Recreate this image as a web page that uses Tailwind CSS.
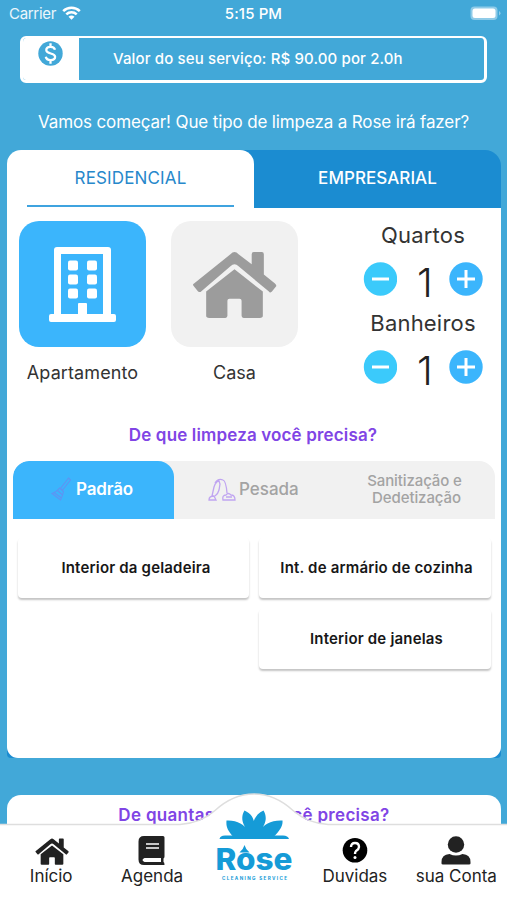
<!DOCTYPE html>
<html lang="pt-BR">
<head>
<meta charset="utf-8">
<title>Rose</title>
<script src="https://cdn.jsdelivr.net/npm/@tailwindcss/browser@4"></script>
</head>
<body class="relative h-[900px] w-[507px] overflow-hidden bg-[#42a8d8] font-['Inter','Liberation_Sans',sans-serif] whitespace-nowrap">
<svg class="hidden">
  <symbol id="house" viewBox="0 0 84 66">
    <path d="M2 32 38 3q4-4 8 0l13 10V3q0-2 2-2h8q2 0 2 2v20l11 9q2 2 1 3l-4 5q-2 2-3 0L46 15q-4-4-8 0L9 40q-1 1-3 0l-4-5q-2-2 0-3Z"/>
    <path d="m42 18 28 22v24q0 2-3 2H51q-2 0-2-2V49q0-2-2-2H37q-2 0-2 2v15q0 2-2 2H17q-3 0-3-2V40Z"/>
  </symbol>
</svg>

<header class="flex h-7 items-center text-[15px] text-white">
  <div class="flex w-[180px] items-center gap-[6px] pl-[9px]">
    <span class="text-white/90 tracking-[-0.3px]">Carrier</span>
    <svg class="-mt-[3px] h-[14px] w-[19px]" viewBox="0 0 19 14" fill="none" stroke="white" stroke-width="2.6"><path d="M1.2 5.1a12 12 0 0 1 16.6 0M4.3 8.4a7.5 7.5 0 0 1 10.4 0"/><path d="M9.5 13.8 6.5 10.8a4.5 4.5 0 0 1 6 0Z" fill="white" stroke="none"/></svg>
  </div>
  <span class="w-[147px] text-center font-medium tracking-[0.1px]">5:15 PM</span>
  <svg class="ml-auto mr-[6px] -mt-px h-[15px] w-[31px]" viewBox="0 0 31 15"><rect x=".5" y=".5" width="27" height="13.5" rx="4" fill="#8fcbe8"/><rect x="2.5" y="2.5" width="23" height="9.5" rx="2.5" fill="#fff"/><path d="M29 5q3 2 0 4.5Z" fill="#8fcbe8"/></svg>
</header>

<section class="mx-5 mt-2 flex h-[47px] overflow-hidden rounded-md border-[3px] border-white border-t-2 border-b-[3px]">
  <div class="w-[56px] shrink-0 bg-white pt-[3px] pl-[15px]">
    <svg class="h-[25px] w-[25px]" viewBox="0 0 25 25"><circle cx="12.5" cy="12.5" r="12.2" fill="#42a8d8"/><path d="M17 8.800C16 4.600 8.300 5 8.300 9.100c0 4.300 8.800 2.500 8.800 6.700 0 4.400-8.600 4.400-9.300 0M12.500 2.200v3.700M12.500 19v3.700" fill="none" stroke="#fff" stroke-width="2.300"/></svg>
  </div>
  <p class="pt-[10px] pl-[34px] text-[15px] leading-[22px] font-medium text-white tracking-[0.13px]">Valor do seu serviço: R$ 90.00 por 2.0h</p>
</section>
<p class="mt-[27px] h-[40px] text-center text-[17px] leading-6 text-white tracking-[-0.13px]">Vamos começar! Que tipo de limpeza a Rose irá fazer?</p>

<main class="mr-[6px] ml-[7px] h-[608px] rounded-t-[16px] rounded-b-[4px] bg-[#1b8cd1]">
  <div class="flex h-[58px] text-[17px] leading-6">
    <div class="w-[247px] rounded-tl-[16px] bg-[linear-gradient(90deg,#42a8d8_50%,#1b8cd1_50%)]"><div class="h-full rounded-t-[14px] bg-white px-5 pt-[16px] text-center text-[#2788cb]"><div class="h-[39px] tracking-[0.15px]">RESIDENCIAL</div><div class="h-[1.500px] bg-[#3fa3df]"></div></div></div>
    <div class="w-[247px] pt-[16px] text-center font-medium text-white tracking-[0.05px]">EMPRESARIAL</div>
  </div>
  <div class="h-[550px] rounded-b-[11px] bg-white pt-[13px]">
    <div class="flex h-[208px] pl-3 text-[18px] text-[#333]">
      <div class="w-[127px] text-center tracking-[0.1px]"><div class="mb-[12px] flex h-[126px] items-center justify-center rounded-[20px] bg-[#3bb5fc]">
        <svg class="h-[76px] w-[67px]" viewBox="0 0 67 76" fill="#fff"><path fill-rule="evenodd" d="M5 68V4q0-3 3-3h51q3 0 3 3v64h3q2 0 2 2v4q0 2-2 2H2q-2 0-2-2v-4q0-2 2-2ZM12 8v60h17V58q0-1 1-1h7q1 0 1 1v10h16V8Z"/><g><rect x="19" y="14.500" width="10" height="10" rx="2"/><rect x="38" y="14.500" width="10" height="10" rx="2"/><rect x="19" y="28.500" width="10" height="10" rx="2"/><rect x="38" y="28.500" width="10" height="10" rx="2"/><rect x="19" y="42.500" width="10" height="10" rx="2"/><rect x="38" y="42.500" width="10" height="10" rx="2"/></g></svg>
      </div>Apartamento</div>
      <div class="ml-[25px] w-[127px] text-center"><div class="mb-[12px] flex h-[126px] items-center justify-center rounded-[20px] bg-[#f1f1f1] text-[#9c9c9c]"><svg class="h-[67px] w-[85px]" fill="currentColor"><use href="#house"/></svg></div>Casa</div>
      <div class="ml-[65px] w-[120px] text-center text-[22px] leading-7 tracking-[0.2px]">
        <div>Quartos</div>
        <div class="flex h-[60px] justify-between pt-[13px] text-[#222]">
          <svg class="h-[34px] w-[34px]" viewBox="0 0 34 34"><circle cx="17.500" cy="17" r="16.700" fill="#3bcafb"/><path d="M9 17h17" stroke="#fff" stroke-width="3"/></svg>
          <span class="relative left-[2px] pt-[7px] text-[40px] leading-[28px] font-light">1</span>
          <svg class="h-[34px] w-[34px]" viewBox="0 0 34 34"><circle cx="17" cy="17" r="16.700" fill="#3bb5fc"/><path d="M8 17h18M17 8v18" stroke="#fff" stroke-width="3"/></svg>
        </div>
        <div>Banheiros</div>
        <div class="flex h-[60px] justify-between pt-[13px] text-[#222]">
          <svg class="h-[34px] w-[34px]" viewBox="0 0 34 34"><circle cx="17.500" cy="17" r="16.700" fill="#3bcafb"/><path d="M9 17h17" stroke="#fff" stroke-width="3"/></svg>
          <span class="relative left-[2px] pt-[7px] text-[40px] leading-[28px] font-light">1</span>
          <svg class="h-[34px] w-[34px]" viewBox="0 0 34 34"><circle cx="17" cy="17" r="16.700" fill="#3bb5fc"/><path d="M8 17h18M17 8v18" stroke="#fff" stroke-width="3"/></svg>
        </div>
      </div>
    </div>
    <h2 class="h-[32px] pr-[2px] text-center text-[17px] leading-[12px] font-semibold text-[#8045e5] tracking-[0.15px]">De que limpeza você precisa?</h2>
    <div class="mx-[6px] flex h-[58px] overflow-hidden rounded-t-[16px] bg-[#f1f1f1] text-[17px] font-medium text-[#a3a3a3]">
      <div class="flex w-[161px] items-center gap-[5px] rounded-t-[16px] bg-[#3bb5fc] pb-px pl-[38px] text-white">
        <svg class="-mt-[2px] h-6 w-5" viewBox="0 0 20 24" fill="none" stroke="#5f93f2" stroke-width="1.1"><path d="m17.500 1 2 2-8 10-2-1.500ZM8.500 11l4 3.500q-1 5-3 8.500L1 16.500q4-1 7.500-5.500ZM6 13l5.500 5M3.500 16l7 5"/></svg><span class="font-semibold tracking-[-0.15px]">Padrão</span>
      </div>
      <div class="flex w-[160px] items-center gap-[3px] pb-px pl-[34px]">
        <svg class="mt-0 h-6 w-7" viewBox="0 0 28 24" fill="none" stroke="#c0a5f1" stroke-width="1.3"><path d="M1 22q0-4 5-4l2 4ZM4 18 6 9q2-6 5-6l1 3-1 6q-1 4-4 6M7 5q3-5 8-3 3 1 4 13M15 22q-1-5 3-5 2-3 5 0 4 0 4 5ZM18 19h6"/></svg><span>Pesada</span>
      </div>
      <div class="w-[161px] pt-[11px] text-center text-[15px] leading-[17px] tracking-[-0.1px]"><div>Sanitização e</div><div class="pl-1">Dedetização</div></div>
    </div>
    <div class="grid grid-cols-[231px_232px] gap-x-[10px] gap-y-[10px] pt-[19px] pl-[11px] text-center text-[15px] leading-[60px] font-semibold tracking-[0.18px] text-[#171717]">
      <div class="h-[60px] rounded-[4px] pl-[5px] shadow-[0_2px_2px_#c4c4c4]">Interior da geladeira</div>
      <div class="h-[60px] rounded-[4px] pl-[3px] shadow-[0_2px_2px_#c4c4c4]">Int. de armário de cozinha</div>
      <div class="col-start-2 mt-px h-[60px] rounded-[4px] pl-[3px] shadow-[0_2px_2px_#c4c4c4]">Interior de janelas</div>
    </div>
  </div>
</main>
<section class="mt-[37px] mr-[6px] ml-[7px] h-[105px] rounded-t-[14px] bg-white pt-[8px] text-center text-[17px] leading-6 font-semibold tracking-[0.31px] text-[#8045e5]">De quantas horas você precisa?</section>

<nav class="absolute inset-x-0 bottom-0 h-[108px] text-[17px] text-[#222]">
  <svg class="absolute inset-0 h-[108px] w-[507px]" viewBox="0 0 507 108"><path d="M0 33H180Q201 32 215 19 233 2 254 2T293 19Q307 32 328 33H507V108H0Z" fill="#fff"/><path d="M0 32.500H180Q201 31 215 18.500 233 2 254 2T293 18.500Q307 31 328 32.500H507" fill="none" stroke="#dedede" stroke-width="1.500"/></svg>
  <div class="relative grid h-full grid-cols-5 text-center leading-6">
    <div class="flex flex-col items-center pt-[46px] pl-[3px]"><svg class="h-[27px] w-[34px]" fill="currentColor" viewBox="0 0 34 27"><use href="#house" width="34" height="27"/></svg><span class="-mt-px -ml-[2px]">Início</span></div>
    <div class="flex flex-col items-center pt-[43px]"><svg class="-ml-[2px] h-[30px] w-[27px]" viewBox="0 0 27 30"><path d="M6 1h19q1.500 0 1.500 1.500v19q0 1.500-1 2v3.500q1 0 1 3H6q-5.500 0-5.500-5.500V6.500Q.5 1 6 1Z" fill="currentColor"/><path d="M8 9h13M8 13h13" stroke="#fff" stroke-width="1.600"/><path d="M6.500 23H23v4H6.500q-4-2 0-4Z" fill="#fff"/></svg><span class="-mt-px">Agenda</span></div>
    <div class="flex flex-col items-center pt-[16px]">
      <svg class="h-[80px] w-[80px]" viewBox="0 0 80 80" fill="#159bd7">
        <path d="M6.500 31Q7 27.500 12 27.500H70Q75 27.500 76 31Z"/>
        <path d="M20 28.500C14 22 13 18 13.500 12.500 24 12 31 16 36 24 28 16 28 8 31.500 2.500 39.500 6 43 13 40.700 23 38.500 13 43 6 50.500 2.500 54 8 54 16 46 24 51 16 58 12 69.500 12.500 70 18 67 22 61 28.500Z"/>
        <text x="2.500" y="61.500" font-family="Inter" font-weight="800" font-size="30" textLength="77" lengthAdjust="spacingAndGlyphs">Rose</text>
        <path d="M31.500 37q-1 4-5 7.500h10Q32.500 41 31.500 37Z"/>
        <text x="9" y="71.500" font-family="Inter" font-weight="700" font-size="4.600" textLength="65">CLEANING SERVICE</text>
      </svg>
    </div>
    <div class="flex flex-col items-center pt-[45px]"><svg class="h-[26px] w-[26px]" viewBox="0 0 26 26"><circle cx="13" cy="13.300" r="12.300" fill="#000"/><path d="M9 10q0-4 4-4t4 4q0 2-3 4-1 1-1 3" fill="none" stroke="#fff" stroke-width="2.400"/><circle cx="13" cy="20.500" r="1.500" fill="#fff"/></svg><span class="mt-px">Duvidas</span></div>
    <div class="flex flex-col items-center pt-[43px]"><svg class="h-[30px] w-[30px]" viewBox="0 0 30 30" fill="currentColor"><circle cx="15" cy="9.500" r="8.200"/><path d="M.5 28.500V27q0-7.500 8-8 6.500 3 13 0 8 .5 8 8v1.500q0 1-1.500 1H2q-1.500 0-1.500-1Z"/></svg><span class="-mt-px">sua Conta</span></div>
  </div>
</nav>
</body>
</html>
